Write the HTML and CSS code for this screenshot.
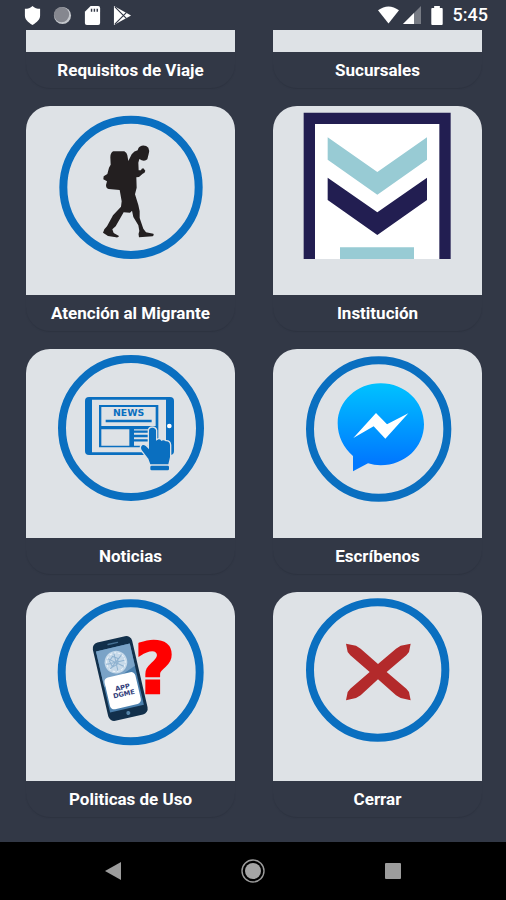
FILE: index.html
```html
<!DOCTYPE html>
<html lang="es">
<head>
<meta charset="utf-8">
<meta name="viewport" content="width=device-width, initial-scale=1">
<title>Menú</title>
<link rel="stylesheet" href="styles.css">
</head>
<body>
<header class="status">
  <div class="status-group notifications">
    <svg class="status-icon" viewBox="0 0 20 20" aria-hidden="true"><path fill="#fff" d="M10 0c2 2 5 3 8 3v7c0 4-3 7-8 10-5-3-8-6-8-10V3c3 0 6-1 8-3z"/></svg>
    <svg class="status-icon" viewBox="0 0 20 20" aria-hidden="true"><circle cx="10" cy="10" r="9" fill="#c4c7cc"/><circle cx="9" cy="9" r="8" fill="#85878f"/></svg>
    <svg class="status-icon" viewBox="0 0 20 20" aria-hidden="true"><path fill="#fff" d="M8 0h8q2 0 2 2v16q0 2-2 2H4q-2 0-2-2V6z"/><path stroke="#323846" stroke-width="1.5" d="M9 3v3M12 3v3M15 3v3"/></svg>
    <svg class="status-icon" viewBox="0 0 20 20" aria-hidden="true"><path fill="#fff" d="M1 0l18 10L1 20z"/><path d="M2 1l12 12M2 19L14 7" stroke="#323846" stroke-width="1.2"/></svg>
  </div>
  <div class="status-group system">
    <svg class="status-wifi" viewBox="0 0 22 18" aria-hidden="true"><path fill="#fff" d="M0 4Q11-4 22 4L11 18z"/></svg>
    <svg class="status-signal" viewBox="0 0 18 18" aria-hidden="true"><path fill="#777b84" d="M18 0v18H0z"/><path fill="#fff" d="M11 7v11H0z"/></svg>
    <svg class="status-battery" viewBox="0 0 12 20" aria-hidden="true"><path fill="#fff" d="M3 0h6v2h2q1 0 1 1v16q0 1-1 1H1q-1 0-1-1V3q0-1 1-1h2z"/></svg>
    <time class="clock">5:45</time>
  </div>
</header>

<main class="menu">
  <button class="card card-partial" type="button"><span class="picture"></span><span class="label">Requisitos de Viaje</span></button>
  <button class="card card-partial" type="button"><span class="picture"></span><span class="label">Sucursales</span></button>

  <button class="card" type="button">
    <span class="picture">
      <svg class="art" viewBox="18 18 627 567" aria-hidden="true">
        <circle cx="333" cy="262" r="203" fill="none" stroke="#0a6fc0" stroke-width="24"/>
        <path fill="#231f20" d="M280 154L313 154Q321 158 322 166L325 183L335 163Q343 153 353 151Q354 141 365 137Q378 135 385 143Q390 153 386 162L382 178Q376 184 365 181L358 177L355 188L356 211L363 211Q364 205 370 205L376 212Q375 219 368 221L357 231L349 232L350 263L345 283L355 315L359 334L359 354L370 386L378 397L400 401Q404 405 398 409L357 412Q353 404 358 393L355 376L340 351L336 332L330 338L311 337L287 379L277 388L281 399L297 408Q296 413 288 412L264 408L249 398L253 388L261 379L279 346L303 320L305 304L299 270L266 267Q258 265 258 255L261 244L250 238L251 229L262 222L267 203L272 194L271 172Q271 158 280 154Z"/>
      </svg>
    </span>
    <span class="label">Atención al Migrante</span>
  </button>

  <button class="card" type="button">
    <span class="picture">
      <svg class="art" viewBox="24 18 627 567" aria-hidden="true">
        <path fill="#221e51" d="M116 38h441v439H116z"/>
        <path fill="#fff" d="M150 72h373v405H150z"/>
        <path fill="#98cbd4" d="M188 112L337 216L486 112V179L337 284L188 179zM225 442h222v35H225z"/>
        <path fill="#221e51" d="M188 233L337 337L486 233V300L337 405L188 300z"/>
      </svg>
    </span>
    <span class="label">Institución</span>
  </button>

  <button class="card" type="button">
    <span class="picture">
      <svg class="art" viewBox="18 18 627 567" aria-hidden="true">
        <circle cx="333" cy="255" r="207" fill="none" stroke="#0a6fc0" stroke-width="24"/>
        <rect x="195" y="162" width="267" height="174" rx="12" fill="#0a6fc0"/>
        <path fill="#dee2e6" d="M216 170H438V328H216z"/>
        <circle cx="448" cy="249" r="7" fill="#fff"/>
        <path fill="#0a6fc0" d="M237 186H415V313H237z"/>
        <path fill="#dee2e6" d="M244 192H407V249H244zM244 259H328V308H244zM342 259H407V308H342z"/>
        <path d="M257 234H395M342 266H385M342 279H385M342 292H385" stroke="#0a6fc0" stroke-width="7"/>
        <text class="news" x="326" y="220" text-anchor="middle">NEWS</text>
        <path fill="#0a6fc0" stroke="#dee2e6" stroke-width="8" stroke-linejoin="round" paint-order="stroke" d="M387 319V262Q388 254 397 254Q406 254 408 262V293L416 289Q422 288 424 294Q430 289 437 295Q449 294 450 306V342L445 364H391L385 347L365 321Q360 311 368 306Q375 304 387 319zM395 368H443Q447 368 447 372V378Q447 382 443 382H395Q391 382 391 378V372Q391 368 395 368z"/>
      </svg>
    </span>
    <span class="label">Noticias</span>
  </button>

  <button class="card" type="button">
    <span class="picture">
      <svg class="art" viewBox="24 18 627 567" aria-hidden="true">
        <defs><linearGradient id="chat" x1="0" y1="0" x2="0" y2="1"><stop offset="0" stop-color="#00c2ff"/><stop offset=".9" stop-color="#0078ff"/></linearGradient></defs>
        <circle cx="341" cy="258" r="206" fill="none" stroke="#0a6fc0" stroke-width="24"/>
        <path fill="url(#chat)" d="M347 121C276 121 218 174 218 241C218 281 236 315 264 339V385L309 361Q327 367 347 367C420 367 477 313 477 244C477 175 420 121 347 121z"/>
        <path fill="#fff" d="M265 285L333 210L366 244L430 211L361 287L326 250z"/>
      </svg>
    </span>
    <span class="label">Escríbenos</span>
  </button>

  <button class="card" type="button">
    <span class="picture">
      <svg class="art" viewBox="18 18 627 567" aria-hidden="true">
        <circle cx="332" cy="259" r="207" fill="none" stroke="#0a6fc0" stroke-width="24"/>
        <text class="question" x="405" y="322" text-anchor="middle">?</text>
        <g transform="rotate(-13 300 277)">
          <rect x="240" y="157" width="121" height="241" rx="18" fill="#12304b"/>
          <path fill="#4b80ad" d="M248 182H352V370H248z"/>
          <path fill="#7aa3c7" d="M248 182H352V250L248 292z"/>
          <circle cx="299" cy="227" r="34" fill="#c6d9e9"/>
          <path d="M277 211l43 34M321 209l-44 35M299 197v60M269 227h60M281 219l12-11 14 9-3 16-18 6z" stroke="#8fb2d0" stroke-width="3" fill="none"/>
          <circle cx="299" cy="227" r="28" fill="none" stroke="#edf4fa" stroke-width="3" stroke-dasharray="8 5"/>
          <rect x="252" y="266" width="95" height="98" rx="13" fill="#fff"/>
          <text class="app" x="301" y="312" text-anchor="middle">APP</text>
          <text class="app" x="301" y="332" text-anchor="middle">DGME</text>
          <path stroke="#456f91" stroke-width="4" stroke-linecap="round" d="M288 170h29"/>
          <circle cx="301" cy="384" r="6" fill="#5484a8"/>
        </g>
      </svg>
    </span>
    <span class="label">Politicas de Uso</span>
  </button>

  <button class="card" type="button">
    <span class="picture">
      <svg class="art" viewBox="24 18 627 567" aria-hidden="true">
        <circle cx="338" cy="252" r="203" fill="none" stroke="#0a6fc0" stroke-width="24"/>
        <path fill="#b32a2b" d="M243 173L273 179L287 188L339 234L393 188L407 179L437 173L432 198L424 208L365 258L424 308L432 318L437 343L407 336L393 328L339 280L287 328L273 336L243 343L248 318L256 308L314 258L256 208L248 198z"/>
      </svg>
    </span>
    <span class="label">Cerrar</span>
  </button>
</main>

<nav class="navbar" aria-label="Sistema">
  <button class="nav-button" type="button" aria-label="Atrás"><svg class="nav-icon" viewBox="0 0 24 24" aria-hidden="true"><path fill="#9c9c9c" d="M4 12L20 3V21z"/></svg></button>
  <button class="nav-button" type="button" aria-label="Inicio"><svg class="nav-icon" viewBox="0 0 24 24" aria-hidden="true"><circle cx="12" cy="12" r="8" fill="#a5a5a5"/><circle cx="12" cy="12" r="11" fill="none" stroke="#9c9c9c" stroke-width="1.4"/></svg></button>
  <button class="nav-button" type="button" aria-label="Recientes"><svg class="nav-icon" viewBox="0 0 24 24" aria-hidden="true"><rect x="4" y="4" width="16" height="16" rx="1" fill="#9c9c9c"/></svg></button>
</nav>
</body>
</html>
```
FILE: styles.css
```css
* {
  box-sizing: border-box;
}

body {
  display: flex;
  flex-direction: column;
  min-height: 100vh;
  margin: 0;
  background: #323846;
  color: #fff;
  font-family: Roboto, "Liberation Sans", sans-serif;
}

button {
  padding: 0;
  border: 0;
  background: none;
  color: inherit;
  font: inherit;
  cursor: pointer;
}

svg {
  display: block;
}

.status {
  display: flex;
  justify-content: space-between;
  align-items: center;
  height: 30px;
  padding: 0 18px 0 23px;
}

.status-group {
  display: flex;
  align-items: center;
}

.notifications {
  gap: 11px;
}

.system {
  gap: 4px;
}

.status-icon {
  width: 19px;
  height: 19px;
}

.status-wifi {
  width: 21px;
  height: 18px;
}

.status-signal {
  width: 18px;
  height: 18px;
}

.status-battery {
  width: 12px;
  height: 19px;
  margin: 0 6px;
}

.clock {
  font-size: 18px;
  font-weight: 500;
  line-height: 20px;
}

.menu {
  display: grid;
  flex: 1;
  grid-template-columns: 1fr 1fr;
  align-content: start;
  gap: 18px 38px;
  padding: 0 24px 25px 26px;
}

.card {
  display: flex;
  flex-direction: column;
  overflow: hidden;
  border-radius: 24px;
  box-shadow: 0 1px 1px #2d3340;
}

.card-partial {
  border-radius: 0 0 24px 24px;
}

.picture {
  width: 100%;
  height: 189px;
  background: #dee2e6;
}

.card-partial .picture {
  height: 22px;
}

.art {
  width: 100%;
  height: 100%;
}

.label {
  width: 100%;
  font-size: 17px;
  font-weight: 700;
  line-height: 36px;
  text-align: center;
}

.news {
  fill: #0a6fc0;
  font: bold 28px "DejaVu Sans", sans-serif;
}

.question {
  fill: #f00;
  stroke: #f00;
  stroke-width: 8px;
  font: bold 206px "DejaVu Sans", sans-serif;
}

.app {
  fill: #313d7a;
  font: bold 20px "DejaVu Sans", sans-serif;
}

.navbar {
  display: flex;
  justify-content: space-around;
  align-items: center;
  height: 58px;
  padding: 0 43px;
  background: #000;
}

.nav-button {
  display: grid;
  place-items: center;
  width: 48px;
  height: 48px;
}

.nav-icon {
  width: 24px;
  height: 24px;
}
```
